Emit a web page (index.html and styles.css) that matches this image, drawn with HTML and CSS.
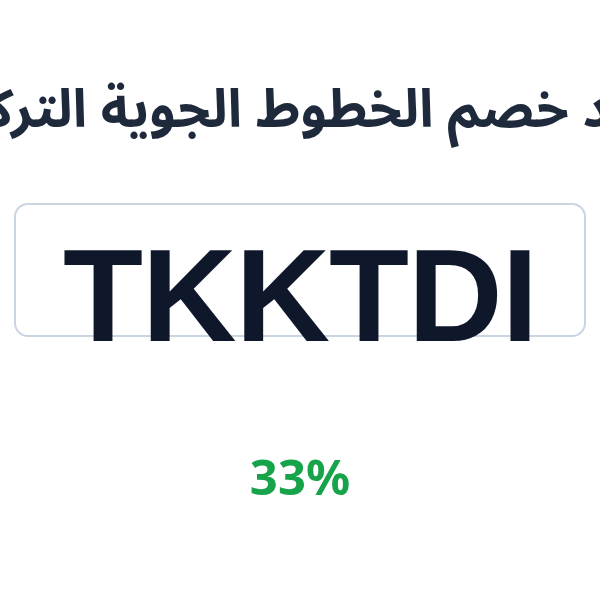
FILE: index.html
```html
<!DOCTYPE html>
<html lang="ar">
<head>
   <meta charset="UTF-8">
   <meta name="viewport" content="width=device-width, initial-scale=1.0">
   <title>كود خصم الخطوط الجوية التركية</title>

   <link rel="stylesheet" href="styles.css">
</head>
<body>

<div class="page">
	<div class="title-row">
		<h1 class="title" dir="rtl">كود خصم الخطوط الجوية التركية</h1>
	</div>

	<div class="code-box">
		<span class="code">TKKTDI</span>
	</div>

	<div class="discount">33%</div>
</div>

</body>
</html>
```

FILE: styles.css
```css
*,
::before,
::after {
    padding: 0;
    margin: 0;
    box-sizing: border-box;
}

html,
body {
    height: 100%;
    font-family: "Noto Sans", "DejaVu Sans", sans-serif;
    background-color: #fff;
}

.page {
    width: 600px;
    overflow: hidden;
}

/* title */
.title-row {
    display: flex;
    justify-content: center;
    padding-top: 70px;
    height: 203px;
}

.title {
    flex-shrink: 0;
    white-space: nowrap;
    font-family: "Noto Sans Arabic", "Noto Sans", "DejaVu Sans", sans-serif;
    font-size: 53px;
    line-height: 80px;
    font-weight: 700;
    color: #1e293b;
}

/* code */
.code-box {
    display: flex;
    justify-content: center;
    margin: 0 14px;
    height: 134px;
    padding-top: 25px;
    border: 2px solid #cbd5e1;
    border-radius: 14px;
}

.code {
    font-family: "Liberation Sans", Arial, sans-serif;
    font-size: 131px;
    line-height: 1;
    height: 131px;
    font-weight: 700;
    letter-spacing: -1px;
    color: #0f172a;
}

/* percent */
.discount {
    margin-top: 109px;
    text-align: center;
    font-size: 49px;
    line-height: 60px;
    font-weight: 700;
    color: #16a34a;
}
```
